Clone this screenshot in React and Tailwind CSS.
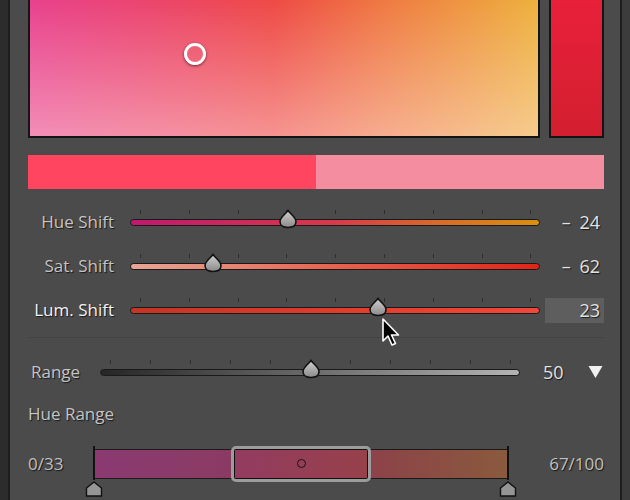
import React from "react";

const font = { fontFamily: '"Open Sans", "Liberation Sans", sans-serif' };

function Thumb({ x }) {
  return (
    <svg
      className="absolute"
      style={{ left: x - 10, top: -10 }}
      width="20"
      height="20"
      viewBox="0 0 20 20"
    >
      <defs>
        <linearGradient id="tg" x1="0" y1="0" x2="0" y2="1">
          <stop offset="0" stopColor="#d0d0d0" />
          <stop offset="1" stopColor="#8a8a8a" />
        </linearGradient>
      </defs>
      <path
        d="M10 1.5 C 12.5 5, 18 8.5, 18 12.5 C 18 16.5, 14.5 18.5, 10 18.5 C 5.5 18.5, 2 16.5, 2 12.5 C 2 8.5, 7.5 5, 10 1.5 Z"
        fill="url(#tg)"
        stroke="#111"
        strokeWidth="1.6"
      />
    </svg>
  );
}

function Track({ width, gradient, thumb, ticks, tickStart, tickStep }) {
  return (
    <div className="relative h-[7px]" style={{ width }}>
      {Array.from({ length: ticks }).map((_, i) => (
        <div
          key={i}
          className="absolute w-px h-[4px] bg-[#2e2e2e] top-[-9px]"
          style={{ left: tickStart + i * tickStep }}
        />
      ))}
      <div
        className="absolute inset-0 rounded-full border border-[#1a1a1a]"
        style={{ background: gradient }}
      />
      <Thumb x={thumb} />
    </div>
  );
}

function ShiftRow({ label, active, gradient, thumb, value, boxed }) {
  return (
    <div className="flex items-center h-[44px]">
      <div
        className={`w-[86px] text-right text-[17px] whitespace-nowrap [text-shadow:1px_1px_1px_rgba(0,0,0,0.7)] ${
          active ? "text-[#f2f2f2]" : "text-[#c4c4c4]"
        }`}
      >
        {label}
      </div>
      <div className="ml-[16px]">
        <Track
          width={410}
          gradient={gradient}
          thumb={thumb}
          ticks={9}
          tickStart={10}
          tickStep={48.8}
        />
      </div>
      <div
        className={`ml-[5px] w-[59px] h-[25px] flex items-center justify-end pr-[4px] text-[18px] text-[#e2e2e2] [word-spacing:4px] [text-shadow:1px_1px_1px_rgba(0,0,0,0.7)] ${
          boxed ? "bg-[#5e5e5e]" : ""
        }`}
      >
        {value}
      </div>
    </div>
  );
}

export default function App() {
  return (
    <div
      className="w-[630px] h-[500px] flex bg-[#2a2a2a] overflow-hidden"
      style={font}
    >
      <div className="w-[10px] shrink-0 bg-[#2c2c2c] border-r-2 border-[#1e1e1e]" />
      <div className="w-[610px] shrink-0 bg-[#4b4b4b] pl-[18px] pr-[16px] flex flex-col relative">
        {/* color field */}
        <div className="flex gap-[9px] h-[138px]">
          <div
            className="relative w-[512px] h-full border-2 border-t-0 border-[#151515]"
            style={{
              background:
                "linear-gradient(to bottom, rgba(255,255,255,0) 0%, rgba(255,235,235,0.45) 100%), linear-gradient(to right, #e8418d 0%, #ec4663 30%, #ee4a45 48%, #ef7a42 70%, #eeb13e 100%)",
            }}
          >
            <div className="absolute left-[154px] top-[43px] w-[22px] h-[22px] rounded-full border-[3px] border-white shadow-[0_1px_3px_rgba(0,0,0,0.6)]" />
          </div>
          <div
            className="w-[55px] h-full border-2 border-t-0 border-[#151515]"
            style={{
              background: "linear-gradient(to bottom, #e8203a, #d31f30)",
            }}
          />
        </div>

        {/* swatch bar */}
        <div className="mt-[17px] flex h-[34px] w-[576px]">
          <div className="w-[288px] bg-[#ff4560]" />
          <div className="flex-1 bg-[#f48d9f]" />
        </div>

        {/* shift sliders */}
        <div className="mt-[11px]">
          <ShiftRow
            label="Hue Shift"
            gradient="linear-gradient(to right, #c0186e, #d83a4a 50%, #d86a2a 75%, #d9900e)"
            thumb={158}
            value="– 24"
          />
          <ShiftRow
            label="Sat. Shift"
            gradient="linear-gradient(to right, #e9a596, #e8624e 50%, #e12418)"
            thumb={83}
            value="– 62"
          />
          <ShiftRow
            label="Lum. Shift"
            active
            gradient="linear-gradient(to right, #c53424, #e03c2c 50%, #f0483a)"
            thumb={248}
            value="23"
            boxed
          />
        </div>

        <div className="mt-[5px] h-px bg-[#434343] w-[576px]" />

        {/* range */}
        <div className="flex items-center h-[44px] mt-[12px]">
          <div className="w-[72px] pl-[3px] text-[17px] text-[#c4c4c4] [text-shadow:1px_1px_1px_rgba(0,0,0,0.7)]">
            Range
          </div>
          <Track
            width={420}
            gradient="linear-gradient(to right, #262626, #6a6a6a 50%, #b4b4b4)"
            thumb={211}
            ticks={11}
            tickStart={10}
            tickStep={40}
          />
          <div className="ml-[23px] text-[18px] text-[#e2e2e2] [text-shadow:1px_1px_1px_rgba(0,0,0,0.7)]">
            50
          </div>
          <svg className="ml-[24px]" width="15" height="14" viewBox="0 0 15 14">
            <path d="M0.5 1 L14.5 1 L7.5 13 Z" fill="#f0f0f0" />
          </svg>
        </div>

        <div className="mt-[7px] text-[17px] text-[#c4c4c4] [text-shadow:1px_1px_1px_rgba(0,0,0,0.7)]">
          Hue Range
        </div>

        {/* hue range */}
        <div className="flex items-center mt-[19px] h-[36px]">
          <div className="w-[66px] text-[17px] text-[#c0c0c0] [text-shadow:1px_1px_1px_rgba(0,0,0,0.7)]">
            0/33
          </div>
          <div className="relative w-[414px] h-[30px]">
            <div
              className="absolute inset-0 border border-[#1a1a1a]"
              style={{
                background:
                  "linear-gradient(to right, #8b3a72, #8a3b5c 45%, #8c4448 70%, #8a5a3d)",
              }}
            />
            <div className="absolute left-[-1px] top-[-3px] w-[2px] h-[34px] bg-[#111]" />
            <div className="absolute right-[-1px] top-[-3px] w-[2px] h-[34px] bg-[#111]" />
            <div className="absolute left-[137px] top-[-3px] w-[140px] h-[36px] rounded-[5px] border-[3px] border-[#9c9c9c] bg-[#111] p-px">
              <div
                className="w-full h-full flex items-center justify-center"
                style={{
                  background: "linear-gradient(to right, #933b60, #97414b)",
                }}
              >
                <div className="w-[9px] h-[9px] rounded-full border-[1.5px] border-[#151515]" />
              </div>
            </div>
            <svg className="absolute left-[-9px] top-[32px]" width="18" height="16" viewBox="0 0 18 16">
              <path d="M9 1 L16.5 7 L16.5 15 L1.5 15 L1.5 7 Z" fill="#959595" stroke="#111" strokeWidth="1.4" />
            </svg>
            <svg className="absolute right-[-9px] top-[32px]" width="18" height="16" viewBox="0 0 18 16">
              <path d="M9 1 L16.5 7 L16.5 15 L1.5 15 L1.5 7 Z" fill="#959595" stroke="#111" strokeWidth="1.4" />
            </svg>
          </div>
          <div className="flex-1 text-right text-[17px] text-[#c0c0c0] [text-shadow:1px_1px_1px_rgba(0,0,0,0.7)]">
            67/100
          </div>
        </div>

        {/* cursor */}
        <svg
          className="absolute left-[372px] top-[318px]"
          width="20"
          height="30"
          viewBox="0 0 20 30"
        >
          <path
            d="M1 1 L1 23 L6 18 L10 27 L13.5 25.5 L9.5 17 L16.5 17 Z"
            fill="#000"
            stroke="#fff"
            strokeWidth="1.6"
            strokeLinejoin="round"
          />
        </svg>
      </div>
      <div className="w-[2px] shrink-0 bg-[#1e1e1e]" />
      <div className="flex-1 bg-[#3c3c3c]" />
    </div>
  );
}
